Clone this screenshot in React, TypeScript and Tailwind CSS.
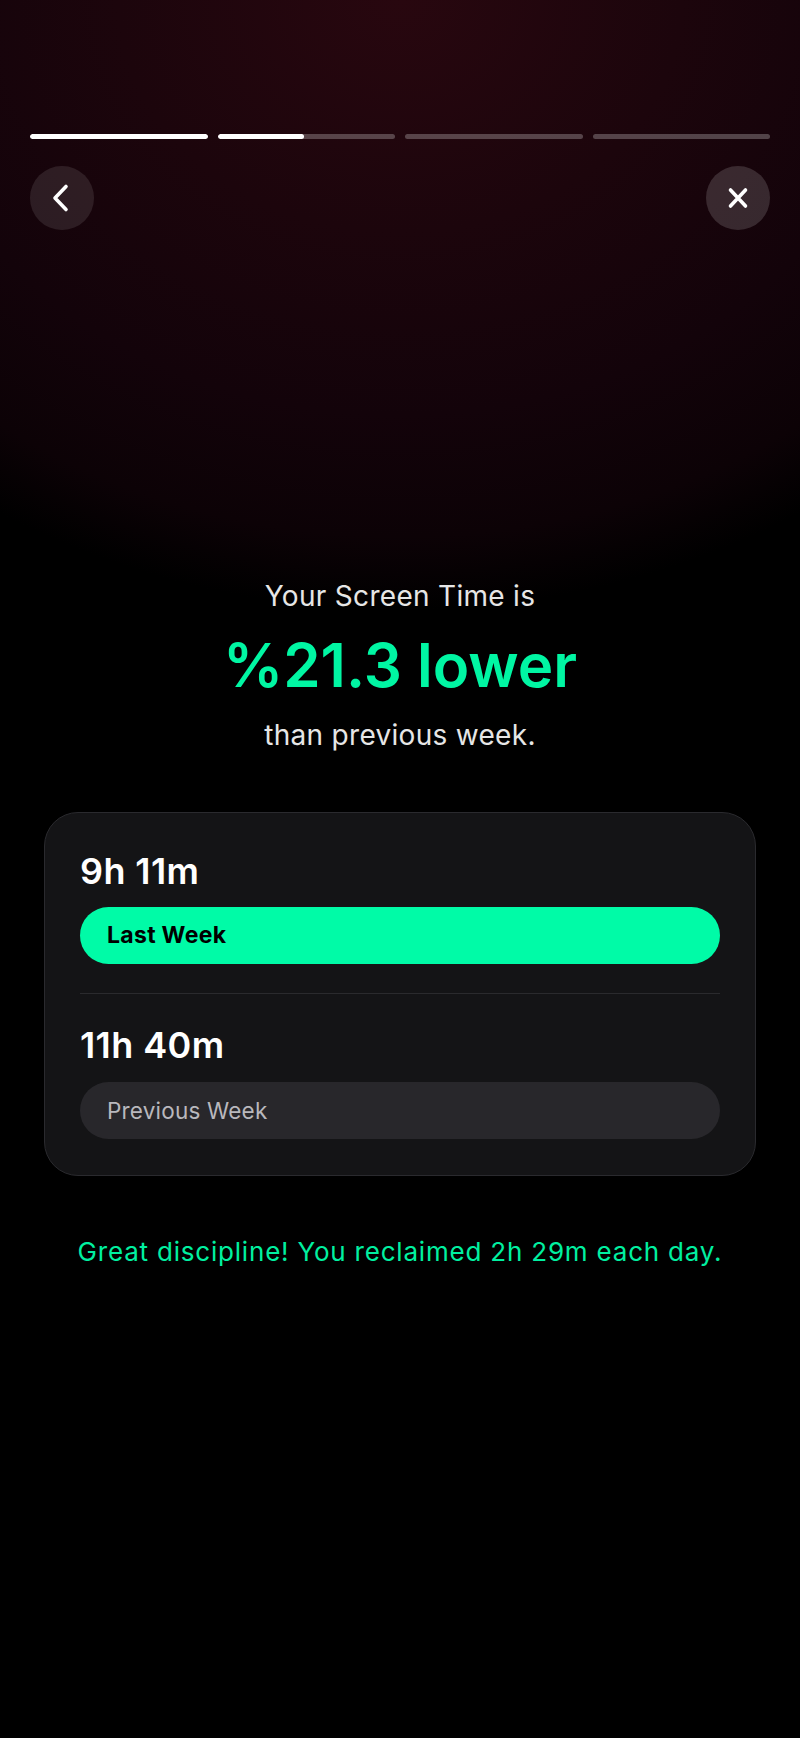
import React from "react";

const segments = [100, 49, 0, 0];

const App: React.FC = () => {
  return (
    <div
      className="min-h-[1738px] w-full bg-black bg-[radial-gradient(ellipse_740px_610px_at_50%_0%,#28070f_0%,#1c050c_38%,#13030a_68%,#0c0206_88%,#000_100%)] text-white"
      style={{ fontFamily: "Inter, 'Noto Sans', sans-serif" }}
    >
      {/* Progress */}
      <div className="flex gap-[10px] px-[30px] pt-[134px]">
        {segments.map((pct, i) => (
          <div key={i} className="h-[5px] flex-1 overflow-hidden rounded-full bg-white/25">
            <div className="h-full rounded-full bg-white" style={{ width: `${pct}%` }} />
          </div>
        ))}
      </div>

      {/* Nav buttons */}
      <div className="mt-[27px] flex items-center justify-between px-[30px]">
        <button className="flex h-16 w-16 items-center justify-center rounded-full bg-white/10">
          <svg width="64" height="64" viewBox="0 0 64 64" fill="none">
            <path d="M36 20.5 L25 32 L36 43.5" stroke="white" strokeWidth="3.6" strokeLinecap="round" strokeLinejoin="round" />
          </svg>
        </button>
        <button className="flex h-16 w-16 items-center justify-center rounded-full bg-white/15">
          <svg width="64" height="64" viewBox="0 0 64 64" fill="none">
            <path d="M24.5 24 L39.5 40 M39.5 24 L24.5 40" stroke="white" strokeWidth="3.6" strokeLinecap="round" />
          </svg>
        </button>
      </div>

      {/* Headline */}
      <div className="mt-[350px] flex flex-col items-center text-center">
        <p className="text-[28px] leading-[32px] tracking-[0.3px] text-[#e6e6e6]">Your Screen Time is</p>
        <p className="mt-[21px] text-[60px] font-semibold leading-[64px] text-[#00f6a3]">%21.3 lower</p>
        <p className="mt-[22px] text-[28px] leading-[32px] tracking-[0.3px] text-[#e6e6e6]">than previous week.</p>
      </div>

      {/* Comparison card */}
      <div className="mx-[44px] mt-[61px] rounded-[34px] border border-[#2a2a2e] bg-[#141416] px-[35px] pb-[36px] pt-[38px]">
        <p className="text-[36px] font-semibold leading-[40px] tracking-[0.4px] text-white">9h 11m</p>
        <div className="mt-[16px] flex h-[57px] items-center rounded-full bg-[#00fba7] pl-[27px]">
          <span className="text-[23px] font-bold tracking-[0.3px] text-black">Last Week</span>
        </div>

        <div className="mt-[29px] h-px bg-[#2a2a2d]" />

        <p className="mt-[31px] text-[36px] font-semibold leading-[40px] tracking-[0.4px] text-white">11h 40m</p>
        <div className="mt-[17px] flex h-[57px] items-center rounded-full bg-[#28272b] pl-[27px]">
          <span className="text-[22.5px] tracking-[0.2px] text-[#b9b8bd]">Previous Week</span>
        </div>
      </div>

      <p className="mt-[61px] text-center text-[26px] leading-[30px] tracking-[0.8px] text-[#00f0a0]">
        Great discipline! You reclaimed 2h 29m each day.
      </p>
    </div>
  );
};

export default App;
